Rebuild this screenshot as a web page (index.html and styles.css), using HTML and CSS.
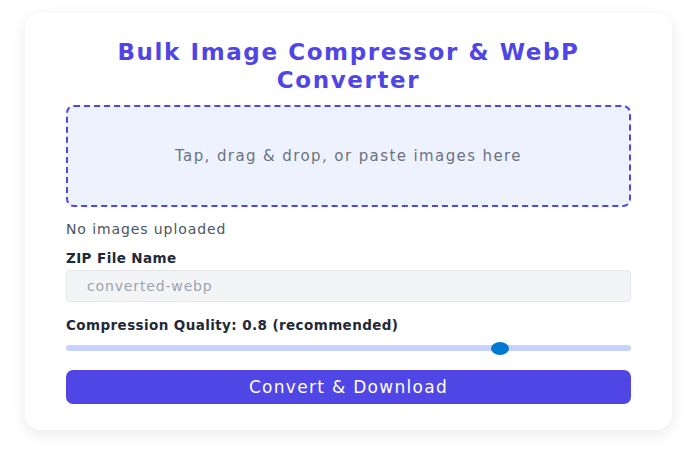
FILE: index.html
```html
<!DOCTYPE html>
<html lang="en">
<head>
<meta charset="utf-8">
<title>Bulk Image Compressor &amp; WebP Converter</title>
<link rel="stylesheet" href="styles.css">
</head>
<body>
<main class="card">
  <h1 class="title">Bulk Image Compressor &amp; WebP Converter</h1>
  <div class="dropzone">Tap, drag &amp; drop, or paste images here</div>
  <p class="status">No images uploaded</p>
  <label class="label" for="zipname">ZIP File Name</label>
  <input class="text-input" id="zipname" type="text" placeholder="converted-webp">
  <label class="label quality" for="quality">Compression Quality: 0.8 (recommended)</label>
  <input class="range" id="quality" type="range" min="0.1" max="1" step="0.1" value="0.8">
  <button class="btn" type="button">Convert &amp; Download</button>
</main>
</body>
</html>
```
FILE: styles.css
```css
* { box-sizing: border-box; }
html, body { margin: 0; padding: 0; background: #ffffff; }
body {
  font-family: "DejaVu Sans", Verdana, sans-serif;
  color: #1f2937;
  padding: 13px 28px 20px 25px;
}
.card {
  width: 647px;
  background: #ffffff;
  border-radius: 16px;
  box-shadow: 0 4px 16px rgba(0, 0, 0, 0.09);
  padding: 25px 41px 26px;
  display: flex;
  flex-direction: column;
}
.card > * { flex-shrink: 0; }
.title {
  margin: 0 0 11px;
  text-align: center;
  color: #4f46e5;
  font-size: 23px;
  line-height: 28px;
  font-weight: 700;
  letter-spacing: 1.6px;
  padding: 0 20px;
}
.dropzone {
  height: 102px;
  border: 2px dashed #4f46e5;
  border-radius: 8px;
  background: #eef2ff;
  display: flex;
  align-items: center;
  justify-content: center;
  color: #6b7280;
  font-size: 15px;
  letter-spacing: 1.4px;
}
.status {
  margin: 13px 0 0;
  font-size: 14px;
  line-height: 18px;
  letter-spacing: 0.9px;
  color: #4b5563;
}
.label {
  display: block;
  margin-top: 11px;
  font-size: 13.5px;
  line-height: 18px;
  font-weight: 700;
  letter-spacing: 0.4px;
  color: #1f2937;
}
.text-input {
  margin-top: 3px;
  width: 100%;
  height: 32px;
  border: 1px solid #e5e7eb;
  border-radius: 4px;
  background: #f3f4f6;
  padding: 0 20px;
  font-family: inherit;
  font-size: 14px;
  letter-spacing: 0.85px;
  color: #374151;
}
.text-input::placeholder { color: #9ca3af; }
.quality { margin-top: 14px; }
.range {
  -webkit-appearance: none;
  appearance: none;
  margin: 7px 0 0;
  width: 100%;
  height: 14px;
  background: transparent;
}
.range::-webkit-slider-runnable-track {
  height: 6px;
  border-radius: 3px;
  background: #c7d2fe;
}
.range::-webkit-slider-thumb {
  -webkit-appearance: none;
  appearance: none;
  width: 18px;
  height: 13px;
  margin-top: -3.5px;
  border-radius: 50%;
  background: #0078d4;
  border: none;
}
.btn {
  margin-top: 15px;
  width: 100%;
  height: 34px;
  border: none;
  border-radius: 7px;
  background: #4f46e5;
  color: #ffffff;
  font-family: inherit;
  font-size: 17px;
  letter-spacing: 1.3px;
}
```
